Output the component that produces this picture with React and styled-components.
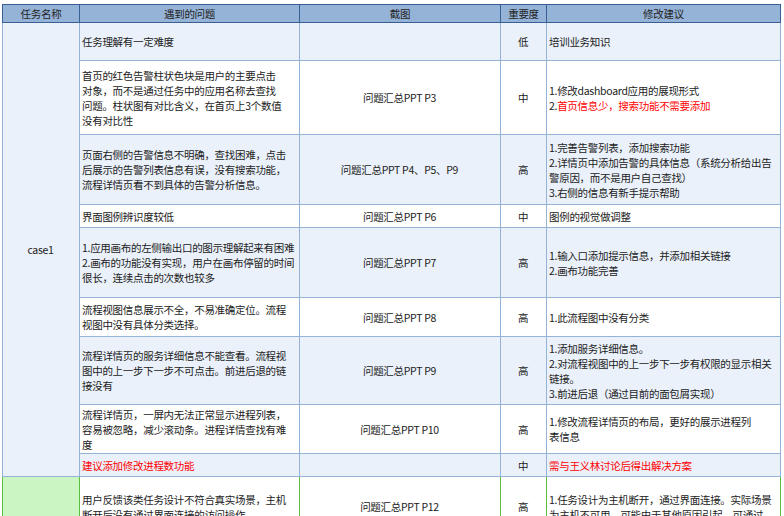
import React from 'react';
import styled, { createGlobalStyle } from 'styled-components';

const Global = createGlobalStyle`
  body { margin: 0; background: #fff; }
`;

const Page = styled.div`
  width: 784px;
  height: 516px;
  overflow: hidden;
  padding: 4px 0 0 2px;
  box-sizing: border-box;
`;

const Table = styled.table`
  border-collapse: collapse;
  table-layout: fixed;
  width: 778px;
  font-family: "Noto Sans CJK SC", "Liberation Sans", sans-serif;
  font-size: 10.5px;
  letter-spacing: -0.3px;
  line-height: 15px;
  color: #222;
`;

const Th = styled.th`
  background: #95b3d7;
  border: 1px solid #3a5f95;
  height: 17px;
  padding: 0;
  font-weight: normal;
  text-align: center;
`;

const Td = styled.td`
  border: 1px solid ${p => (p.$green ? '#5bbf3e' : '#95b3d7')};
  background: ${p => (p.$bg ? p.$bg : p.$alt ? '#eaf1fa' : '#fff')};
  padding: 0 3px 0 2px;
  text-align: ${p => (p.$center ? 'center' : 'left')};
  vertical-align: middle;
  color: ${p => (p.$red ? '#ff0000' : '#222')};
`;

const Red = styled.span`
  color: #ff0000;
`;

const rows = [
  { h: 38, q: '任务理解有一定难度', s: '', l: '低', f: ['培训业务知识'] },
  { h: 74, q: '首页的红色告警柱状色块是用户的主要点击对象，而不是通过任务中的应用名称去查找问题。柱状图有对比含义，在首页上3个数值没有对比性', s: '问题汇总PPT P3', l: '中', f: ['1.修改dashboard应用的展现形式', <>2.<Red>首页信息少，搜索功能不需要添加</Red></>] },
  { h: 70, q: '页面右侧的告警信息不明确，查找困难，点击后展示的告警列表信息有误，没有搜索功能，流程详情页看不到具体的告警分析信息。', s: '问题汇总PPT P4、P5、P9', l: '高', f: ['1.完善告警列表，添加搜索功能', '2.详情页中添加告警的具体信息（系统分析给出告警原因，而不是用户自己查找）', '3.右侧的信息有新手提示帮助'] },
  { h: 23, q: '界面图例辨识度较低', s: '问题汇总PPT P6', l: '中', f: ['图例的视觉做调整'] },
  { h: 70, q: '', s: '问题汇总PPT P7', l: '高', f: ['1.输入口添加提示信息，并添加相关链接', '2.画布功能完善'] },
  { h: 39, q: '流程视图信息展示不全，不易准确定位。流程视图中没有具体分类选择。', s: '问题汇总PPT P8', l: '高', f: ['1.此流程图中没有分类'] },
  { h: 68, q: '流程详情页的服务详细信息不能查看。流程视图中的上一步下一步不可点击。前进后退的链接没有', s: '问题汇总PPT P9', l: '高', f: ['1.添加服务详细信息。', '2.对流程视图中的上一步下一步有权限的显示相关链接。', '3.前进后退（通过目前的面包屑实现）'] },
  { h: 49, q: '流程详情页，一屏内无法正常显示进程列表，容易被忽略，减少滚动条。进程详情查找有难度', s: '问题汇总PPT P10', l: '高', f: ['1.修改流程详情页的布局，更好的展示进程列表信息'] },
  { h: 23, q: <Red>建议添加修改进程数功能</Red>, s: '', l: '中', f: [<Red>需与王义林讨论后得出解决方案</Red>] },
];

const Block = styled.div`
  max-width: ${p => p.$w}px;
`;

export default function App() {
  return (
    <Page>
      <Global />
      <Table>
        <colgroup>
          <col style={{ width: 77 }} />
          <col style={{ width: 220 }} />
          <col style={{ width: 201 }} />
          <col style={{ width: 46 }} />
          <col style={{ width: 234 }} />
        </colgroup>
        <thead>
          <tr>
            <Th>任务名称</Th>
            <Th>遇到的问题</Th>
            <Th>截图</Th>
            <Th>重要度</Th>
            <Th>修改建议</Th>
          </tr>
        </thead>
        <tbody>
          {rows.map((r, i) => (
            <tr key={i} style={{ height: r.h }}>
              {i === 0 && (
                <Td rowSpan={rows.length} $alt $center>case1</Td>
              )}
              <Td $alt={i % 2 === 0}>
                {i === 4 ? (
                  <>
                    <Block $w={220}>1.应用画布的左侧输出口的图示理解起来有困难</Block>
                    <Block $w={220}>2.画布的功能没有实现，用户在画布停留的时间很长，连续点击的次数也较多</Block>
                  </>
                ) : (
                  <Block $w={i === 1 ? 200 : 220}>{r.q}</Block>
                )}
              </Td>
              <Td $alt={i % 2 === 0} $center>{r.s}</Td>
              <Td $alt={i % 2 === 0} $center>{r.l}</Td>
              <Td $alt={i % 2 === 0}>
                {r.f.map((x, j) => (
                  <Block key={j} $w={i === 7 ? 205 : 234}>{x}</Block>
                ))}
              </Td>
            </tr>
          ))}
          <tr style={{ height: 60 }}>
            <Td $green $bg="#ccf5c4"></Td>
            <Td $green>用户反馈该类任务设计不符合真实场景，主机断开后没有通过界面连接的访问操作</Td>
            <Td $green $center>问题汇总PPT P12</Td>
            <Td $green $center>高</Td>
            <Td $green>1.任务设计为主机断开，通过界面连接。实际场景为主机不可用，可能由于其他原因引起，可通过</Td>
          </tr>
        </tbody>
      </Table>
    </Page>
  );
}
